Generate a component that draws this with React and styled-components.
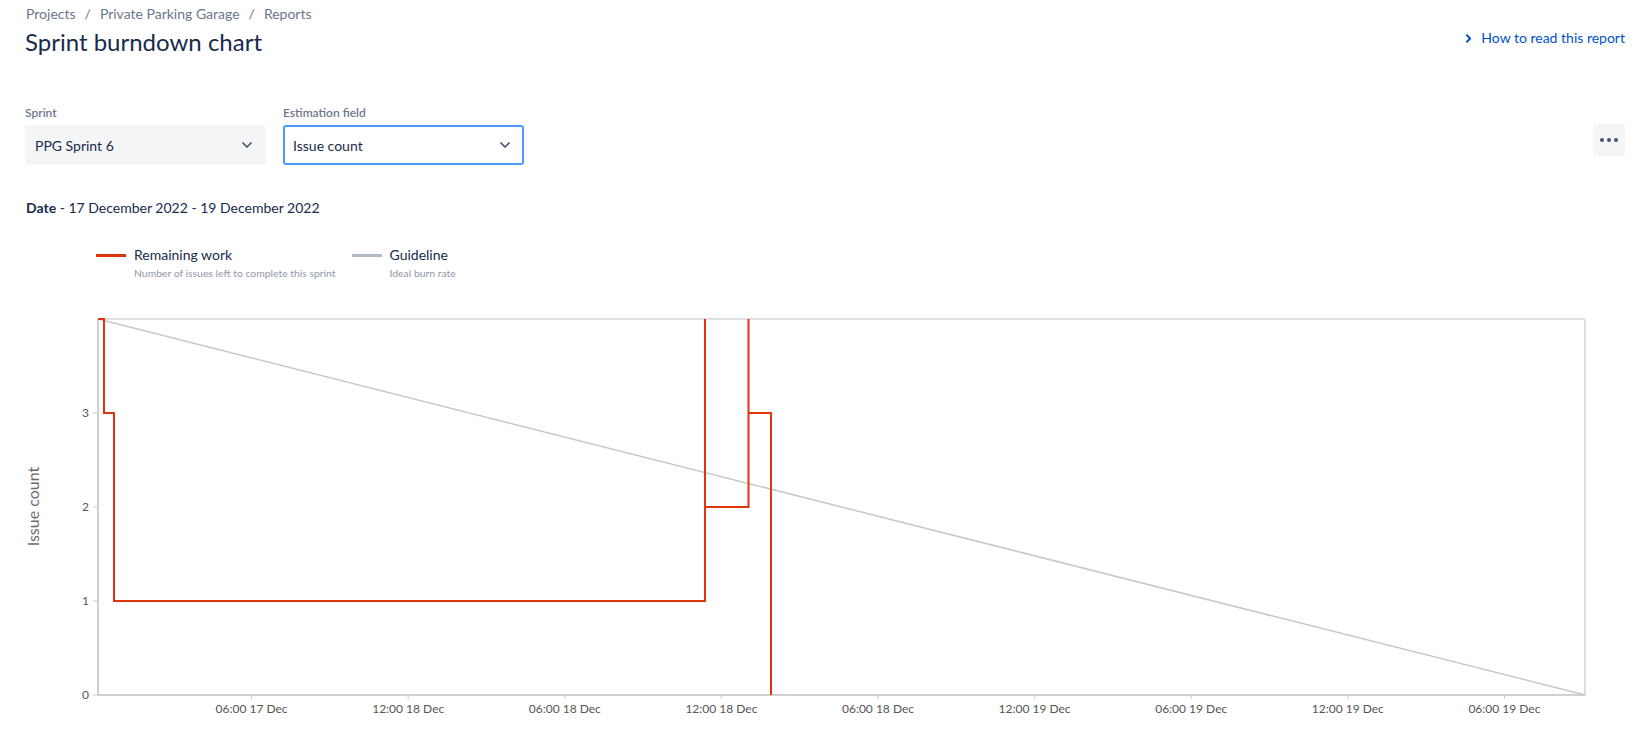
import React from "react";
import styled, { createGlobalStyle } from "styled-components";
import { ChevronDown, ChevronRight } from "lucide-react";

const Global = createGlobalStyle`
  html, body { margin: 0; padding: 0; background: #fff; overflow: hidden; }
  body { font-family: Lato, "Open Sans", "Liberation Sans", sans-serif; color: #172b4d; }
`;

const Page = styled.div`
  width: 1634px;
  height: 738px;
  box-sizing: border-box;
  padding-top: 4px;
  display: flex;
  flex-direction: column;
`;

const Section = styled.div`
  padding: 0 9px 0 25px;
`;

const Header = styled(Section)`
  display: flex;
  justify-content: space-between;
  align-items: flex-start;
`;

const Breadcrumbs = styled.div`
  font-size: 14px;
  line-height: 20px;
  color: #6b778c;
  padding-left: 1px;
  display: flex;
  gap: 9px;
`;

const Title = styled.h1`
  margin: 4px 0 0 0;
  font-size: 24px;
  font-weight: 400;
  line-height: 28px;
  color: #172b4d;
`;

const HelpLink = styled.a`
  margin-top: 24px;
  display: flex;
  align-items: center;
  gap: 6px;
  color: #0052cc;
  font-size: 14px;
  line-height: 20px;
  text-decoration: none;
`;

const Controls = styled(Section)`
  margin-top: 49px;
  display: flex;
  align-items: flex-start;
  gap: 17px;
`;

const Field = styled.div`
  display: flex;
  flex-direction: column;
  gap: 4px;
`;

const Label = styled.label`
  font-size: 12px;
  line-height: 16px;
  font-weight: 600;
  color: #6b778c;
`;

const Select = styled.div`
  width: 241px;
  height: 40px;
  box-sizing: border-box;
  border-radius: 3px;
  background: ${(p) => (p.$focused ? "#fff" : "#f4f5f7")};
  border: 2px solid ${(p) => (p.$focused ? "#4c9aff" : "#f4f5f7")};
  display: flex;
  align-items: center;
  justify-content: space-between;
  padding: 0 9px 0 8px;
  font-size: 14px;
  color: #172b4d;
  svg { color: #42526e; }
`;

const Spacer = styled.div`
  flex: 1;
`;

const MoreButton = styled.button`
  margin-top: 19px;
  width: 32px;
  height: 32px;
  border: none;
  border-radius: 3px;
  background: #f4f5f7;
  display: flex;
  align-items: center;
  justify-content: center;
  gap: 3px;
  padding: 0;
`;

const Dot = styled.span`
  width: 4px;
  height: 4px;
  border-radius: 50%;
  background: #42526e;
`;

const DateLine = styled(Section)`
  margin-top: 33px;
  font-size: 14px;
  line-height: 20px;
  color: #172b4d;
  padding-left: 26px;
  b { font-weight: 700; }
`;

const Legend = styled.div`
  margin-top: 27px;
  padding-left: 96px;
  display: flex;
  gap: 16px;
`;

const LegendItem = styled.div`
  display: flex;
  align-items: flex-start;
  gap: 8px;
`;

const Swatch = styled.span`
  margin-top: 9px;
  width: 30px;
  height: 3px;
  background: ${(p) => p.$color};
`;

const LegendText = styled.div`
  display: flex;
  flex-direction: column;
`;

const LegendTitle = styled.span`
  font-size: 14px;
  line-height: 20px;
  color: #172b4d;
`;

const LegendSub = styled.span`
  font-size: 10.4px;
  line-height: 14px;
  color: #8f98a8;
  margin-top: 1px;
`;

const ChartSvg = styled.svg`
  display: block;
  margin-top: 16px;
  font-family: Lato, "Open Sans", "Liberation Sans", sans-serif;
`;

const X0 = 98, X1 = 1585, Y0 = 23, YB = 399;
const yOf = (v) => YB - v * 94;
const xTicks = [
  "06:00 17 Dec", "12:00 18 Dec", "06:00 18 Dec", "12:00 18 Dec", "06:00 18 Dec",
  "12:00 19 Dec", "06:00 19 Dec", "12:00 19 Dec", "06:00 19 Dec",
];
const redPts = [
  [98, 4], [104, 4], [104, 3], [114, 3], [114, 1], [705, 1], [705, 4], [705, 2],
  [748.5, 2], [748.5, 4], [748.5, 3], [771, 3], [771, 0],
];

function Chart() {
  const d = redPts.map(([x, v], i) => `${i ? "L" : "M"}${x} ${yOf(v)}`).join(" ");
  return (
    <ChartSvg width="1634" height="440">
      <line x1={X0} y1={Y0} x2={X1} y2={Y0} stroke="#e0e0e0" strokeWidth="2" />
      <line x1={X1} y1={Y0} x2={X1} y2={YB} stroke="#e0e0e0" strokeWidth="2" />
      <line x1={X0} y1={Y0} x2={X0} y2={YB} stroke="#d0d0d0" strokeWidth="2" />
      <line x1={X0} y1={YB} x2={X1} y2={YB} stroke="#d0d0d0" strokeWidth="2" />
      {[0, 1, 2, 3].map((v) => (
        <g key={v}>
          <line x1={93} y1={yOf(v)} x2={X0} y2={yOf(v)} stroke="#ccc" />
          <text x={89} y={yOf(v) + 4} textAnchor="end" fontSize="12" fill="#555">{v}</text>
        </g>
      ))}
      {xTicks.map((t, i) => {
        const x = 251.6 + i * 156.6;
        return (
          <g key={i}>
            <line x1={x} y1={YB} x2={x} y2={YB + 4} stroke="#ccc" />
            <text x={x} y={417} textAnchor="middle" fontSize="12" fill="#555">{t}</text>
          </g>
        );
      })}
      <text transform="translate(39 210.5) rotate(-90)" textAnchor="middle" fontSize="16" fill="#6b6b6b">Issue count</text>
      <line x1={X0} y1={Y0} x2={X1} y2={YB} stroke="#c8c8c8" strokeWidth="1.5" />
      <path d={d} fill="none" stroke="#de350b" strokeWidth="2" />
    </ChartSvg>
  );
}

export default function App() {
  return (
    <>
      <Global />
      <Page>
        <Header>
          <div>
            <Breadcrumbs>
              <span>Projects</span><span>/</span><span>Private Parking Garage</span><span>/</span><span>Reports</span>
            </Breadcrumbs>
            <Title>Sprint burndown chart</Title>
          </div>
          <HelpLink href="#">
            <ChevronRight size={13} strokeWidth={3.5} />
            How to read this report
          </HelpLink>
        </Header>
        <Controls>
          <Field>
            <Label>Sprint</Label>
            <Select>PPG Sprint 6<ChevronDown size={16} strokeWidth={2.5} /></Select>
          </Field>
          <Field>
            <Label>Estimation field</Label>
            <Select $focused>Issue count<ChevronDown size={16} strokeWidth={2.5} /></Select>
          </Field>
          <Spacer />
          <MoreButton aria-label="More"><Dot /><Dot /><Dot /></MoreButton>
        </Controls>
        <DateLine><b>Date</b> - 17 December 2022 - 19 December 2022</DateLine>
        <Legend>
          <LegendItem>
            <Swatch $color="#de350b" />
            <LegendText>
              <LegendTitle>Remaining work</LegendTitle>
              <LegendSub>Number of issues left to complete this sprint</LegendSub>
            </LegendText>
          </LegendItem>
          <LegendItem>
            <Swatch $color="#b3bac5" />
            <LegendText>
              <LegendTitle>Guideline</LegendTitle>
              <LegendSub>Ideal burn rate</LegendSub>
            </LegendText>
          </LegendItem>
        </Legend>
        <Chart />
      </Page>
    </>
  );
}
